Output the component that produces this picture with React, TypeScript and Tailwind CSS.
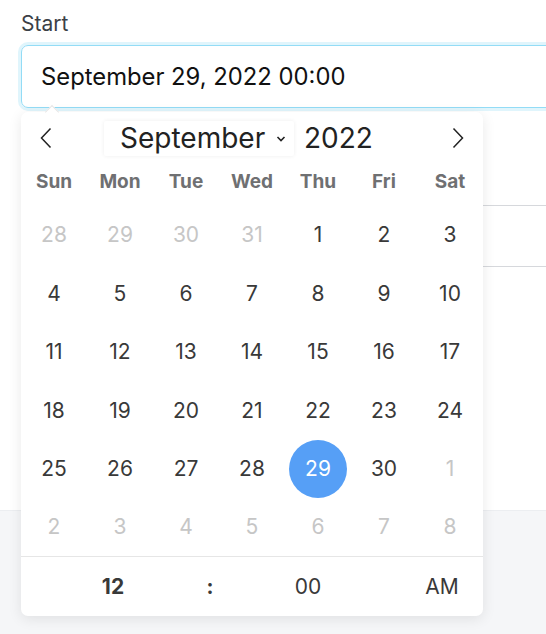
import React from "react";

const weekdays = ["Sun", "Mon", "Tue", "Wed", "Thu", "Fri", "Sat"];

type Day = { n: number; faded?: boolean; selected?: boolean };

const days: Day[] = [
  { n: 28, faded: true },
  { n: 29, faded: true },
  { n: 30, faded: true },
  { n: 31, faded: true },
  ...Array.from({ length: 30 }, (_, i) => ({ n: i + 1, selected: i + 1 === 29 })),
  { n: 1, faded: true },
  { n: 2, faded: true },
  { n: 3, faded: true },
  { n: 4, faded: true },
  { n: 5, faded: true },
  { n: 6, faded: true },
  { n: 7, faded: true },
  { n: 8, faded: true },
];

function Chevron({ dir }: { dir: "left" | "right" }) {
  return (
    <svg width="12" height="22" viewBox="0 0 12 22" fill="none">
      {dir === "left" ? (
        <path d="M10.5 1.5 L1.5 11 L10.5 20.5" stroke="#222" strokeWidth="1.5" />
      ) : (
        <path d="M1.5 1.5 L10.5 11 L1.5 20.5" stroke="#222" strokeWidth="1.5" />
      )}
    </svg>
  );
}

export default function App() {
  return (
    <div className="min-h-[634px] bg-[#f5f6f8] font-['Inter',sans-serif]">
      <div className="relative h-[511px] bg-white pl-[21px] pt-[12px] border-b border-[#eceef1]">
        <div className="text-[21px] leading-[24px] text-[#3b3f46]">Start</div>
        <div className="mt-[9px] h-[63px] w-[540px] rounded-[7px] border border-[#93dcf6] shadow-[0_0_0_3px_#e0f5fc] flex items-center pl-[19px] text-[23.8px] text-[#111]">
          September 29, 2022 00:00
        </div>
        <div className="mt-[24px] text-[21px] leading-[24px] text-[#3b3f46]">End</div>
        <div className="mt-[49px] h-[62px] w-[540px] rounded-[7px] border border-[#d6d8dc]" />

        {/* calendar popup */}
        <div className="absolute left-[21px] top-[112px] w-[462px] h-[504px] rounded-[7px] bg-white shadow-[0_3px_14px_rgba(0,0,0,0.09)]">
          <div className="absolute -top-[5px] left-[26px] w-[10px] h-[10px] rotate-45 bg-white border-l border-t border-[#e6e6e6]" />
          {/* nav */}
          <div className="relative flex h-[52px] items-center pl-[19px] pr-[19px]">
            <Chevron dir="left" />
            <div className="flex flex-1 items-center">
              <div className="ml-[52px] flex h-[35px] w-[190px] items-center rounded-[2px] bg-white pl-[16px] shadow-[0_0_4px_rgba(0,0,0,0.07)]">
                <span className="text-[28px] leading-none text-[#222]">September</span>
                <svg width="10" height="8" viewBox="0 0 10 8" className="ml-[11px] mt-[2px]">
                  <path d="M1.5 2 L5 5.5 L8.5 2" stroke="#222" strokeWidth="1.6" fill="none" />
                </svg>
              </div>
              <span className="ml-[10px] text-[28px] leading-none text-[#222]">2022</span>
            </div>
            <Chevron dir="right" />
          </div>
          {/* weekdays */}
          <div className="grid h-[36px] grid-cols-7 items-center">
            {weekdays.map((w) => (
              <div key={w} className="text-center text-[19px] font-bold text-[#6f7072]">
                {w}
              </div>
            ))}
          </div>
          {/* days */}
          <div className="mt-[6px] grid grid-cols-7 grid-rows-[repeat(6,58.4px)]">
            {days.map((d, i) => (
              <div key={i} className="flex items-center justify-center">
                {d.selected ? (
                  <div className="flex h-[58px] w-[58px] items-center justify-center rounded-full bg-[#569ff6] text-[21px] text-white">
                    {d.n}
                  </div>
                ) : (
                  <span className={`text-[21px] ${d.faded ? "text-[#c6c6c6]" : "text-[#393939]"}`}>
                    {d.n}
                  </span>
                )}
              </div>
            ))}
          </div>
          {/* time */}
          <div className="flex h-[59px] items-center border-t border-[#e6e6e6] text-[21px] text-[#393939]">
            <div className="w-[184px] text-center font-bold">12</div>
            <div className="w-[10px] text-center font-bold">:</div>
            <div className="w-[186px] text-center">00</div>
            <div className="w-[82px] text-center">AM</div>
          </div>
        </div>
      </div>
    </div>
  );
}
